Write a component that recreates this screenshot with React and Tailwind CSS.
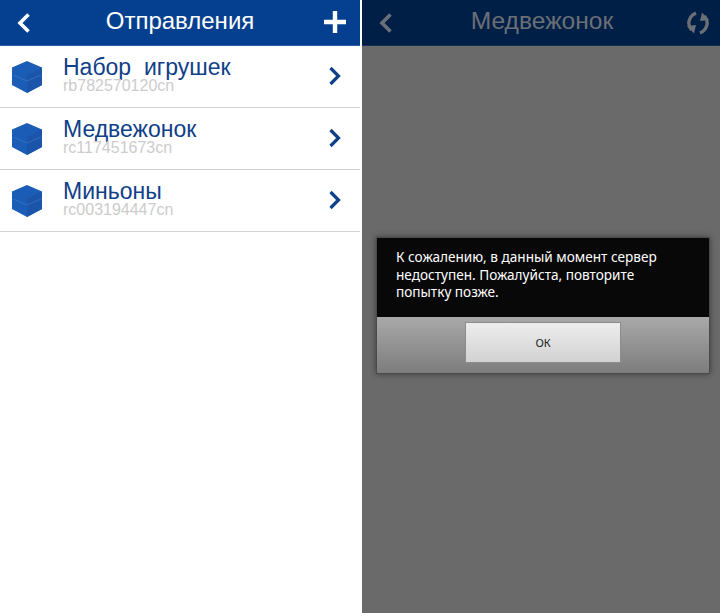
const shipments = [
  { name: "Набор  игрушек", track: "rb782570120cn" },
  { name: "Медвежонок", track: "rc117451673cn" },
  { name: "Миньоны", track: "rc003194447cn" },
];

const Box = () => (
  <svg width="32" height="34" viewBox="0 0 32 34" className="shrink-0">
    <path d="M16 1 L31 7.5 L31 25 L16 33 L1 25 L1 7.5 Z" fill="#1a5cb6" />
    <path d="M31 7.5 L16 15 L16 33 L31 25 Z" fill="#1a55aa" />
    <path d="M2 15 L16 21 L30 15" fill="none" stroke="#4a82cc" strokeWidth="1" opacity="0.5" />
  </svg>
);

const Back = ({ color }) => (
  <svg width="14" height="22" viewBox="0 0 14 22">
    <path d="M11.5 2.5 L3 11 L11.5 19.5" fill="none" stroke={color} strokeWidth="3.6" />
  </svg>
);

const Row = ({ item }) => (
  <div className="h-[62px] flex items-center pl-[11px] pr-[18px] border-b border-[#d2d2d2]">
    <Box />
    <div className="ml-[20px] flex-1 mt-[-4px]">
      <p className="text-[23px] leading-[23px] text-[#0f4088] whitespace-pre">{item.name}</p>
      <p className="text-[16px] leading-[14px] text-[#cccccc]">{item.track}</p>
    </div>
    <svg width="14" height="20" viewBox="0 0 14 20" className="mt-[-2px] ml-[-1px]">
      <path d="M2.5 2 L10.5 10 L2.5 18" fill="none" stroke="#0f4088" strokeWidth="3.2" />
    </svg>
  </div>
);

export default function App() {
  return (
    <div className="flex h-[613px] w-[720px] overflow-hidden bg-white font-['Liberation_Sans',Arial,sans-serif]">
      {/* shipments list */}
      <div className="w-[360px] shrink-0">
        <div className="h-[46px] bg-[#04408f] border-b border-[#2d5fa3] flex items-center justify-between pl-[17px] pr-[13px]">
          <Back color="#ffffff" />
          <h1 className="text-[24px] leading-[28px] text-white mt-[-4px] ml-[6px]">Отправления</h1>
          <svg width="24" height="24" viewBox="0 0 24 24" className="mt-[-2px]">
            <path d="M12 1 V23 M1 12 H23" stroke="#ffffff" strokeWidth="4.4" />
          </svg>
        </div>
        {shipments.map((item) => (
          <Row key={item.track} item={item} />
        ))}
      </div>

      {/* details with error dialog */}
      <div className="relative ml-[2px] flex-1 flex flex-col bg-[#6a6a6a]">
        <div className="h-[46px] bg-[#001f47] border-b border-[#16314f] flex items-center justify-between pl-[17px] pr-[10px]">
          <Back color="#6b6f76" />
          <h2 className="text-[24.6px] leading-[28px] text-[#6b6f76] mt-[-4px] ml-[5px]">Медвежонок</h2>
          <svg width="24" height="26" viewBox="0 0 24 26" fill="none" stroke="#6b6f76" strokeWidth="3.4">
            <path d="M10 3 C3 6 0.5 14 5.5 20" />
            <path d="M1 16 L8 23.5 L10 15 Z" fill="#6b6f76" stroke="none" />
            <path d="M14 23 C21 20 23.5 12 18.5 6" />
            <path d="M23 10 L16 2.5 L14 11 Z" fill="#6b6f76" stroke="none" />
          </svg>
        </div>
        <div className="absolute left-[14px] top-[237px] w-[334px] h-[137px] border border-[#4a4a4a] shadow-[0_0_6px_rgba(0,0,0,0.45)] flex flex-col font-['Noto_Sans',sans-serif]">
          <div className="h-[79px] bg-[#080808] pl-[19px] pt-[10px] text-[13.6px] leading-[17.5px] text-white">
            <p>К сожалению, в данный момент сервер</p>
            <p>недоступен. Пожалуйста, повторите</p>
            <p>попытку позже.</p>
          </div>
          <div className="flex-1 bg-gradient-to-b from-[#a9a9a9] to-[#7d7d7d] flex justify-center pt-[5px]">
            <button className="w-[156px] h-[41px] pt-[2px] bg-gradient-to-b from-[#ededed] to-[#d2d2d2] border border-[#8c8c8c] text-[11px] text-[#1c1c1c]">
              ОК
            </button>
          </div>
        </div>
      </div>
    </div>
  );
}
